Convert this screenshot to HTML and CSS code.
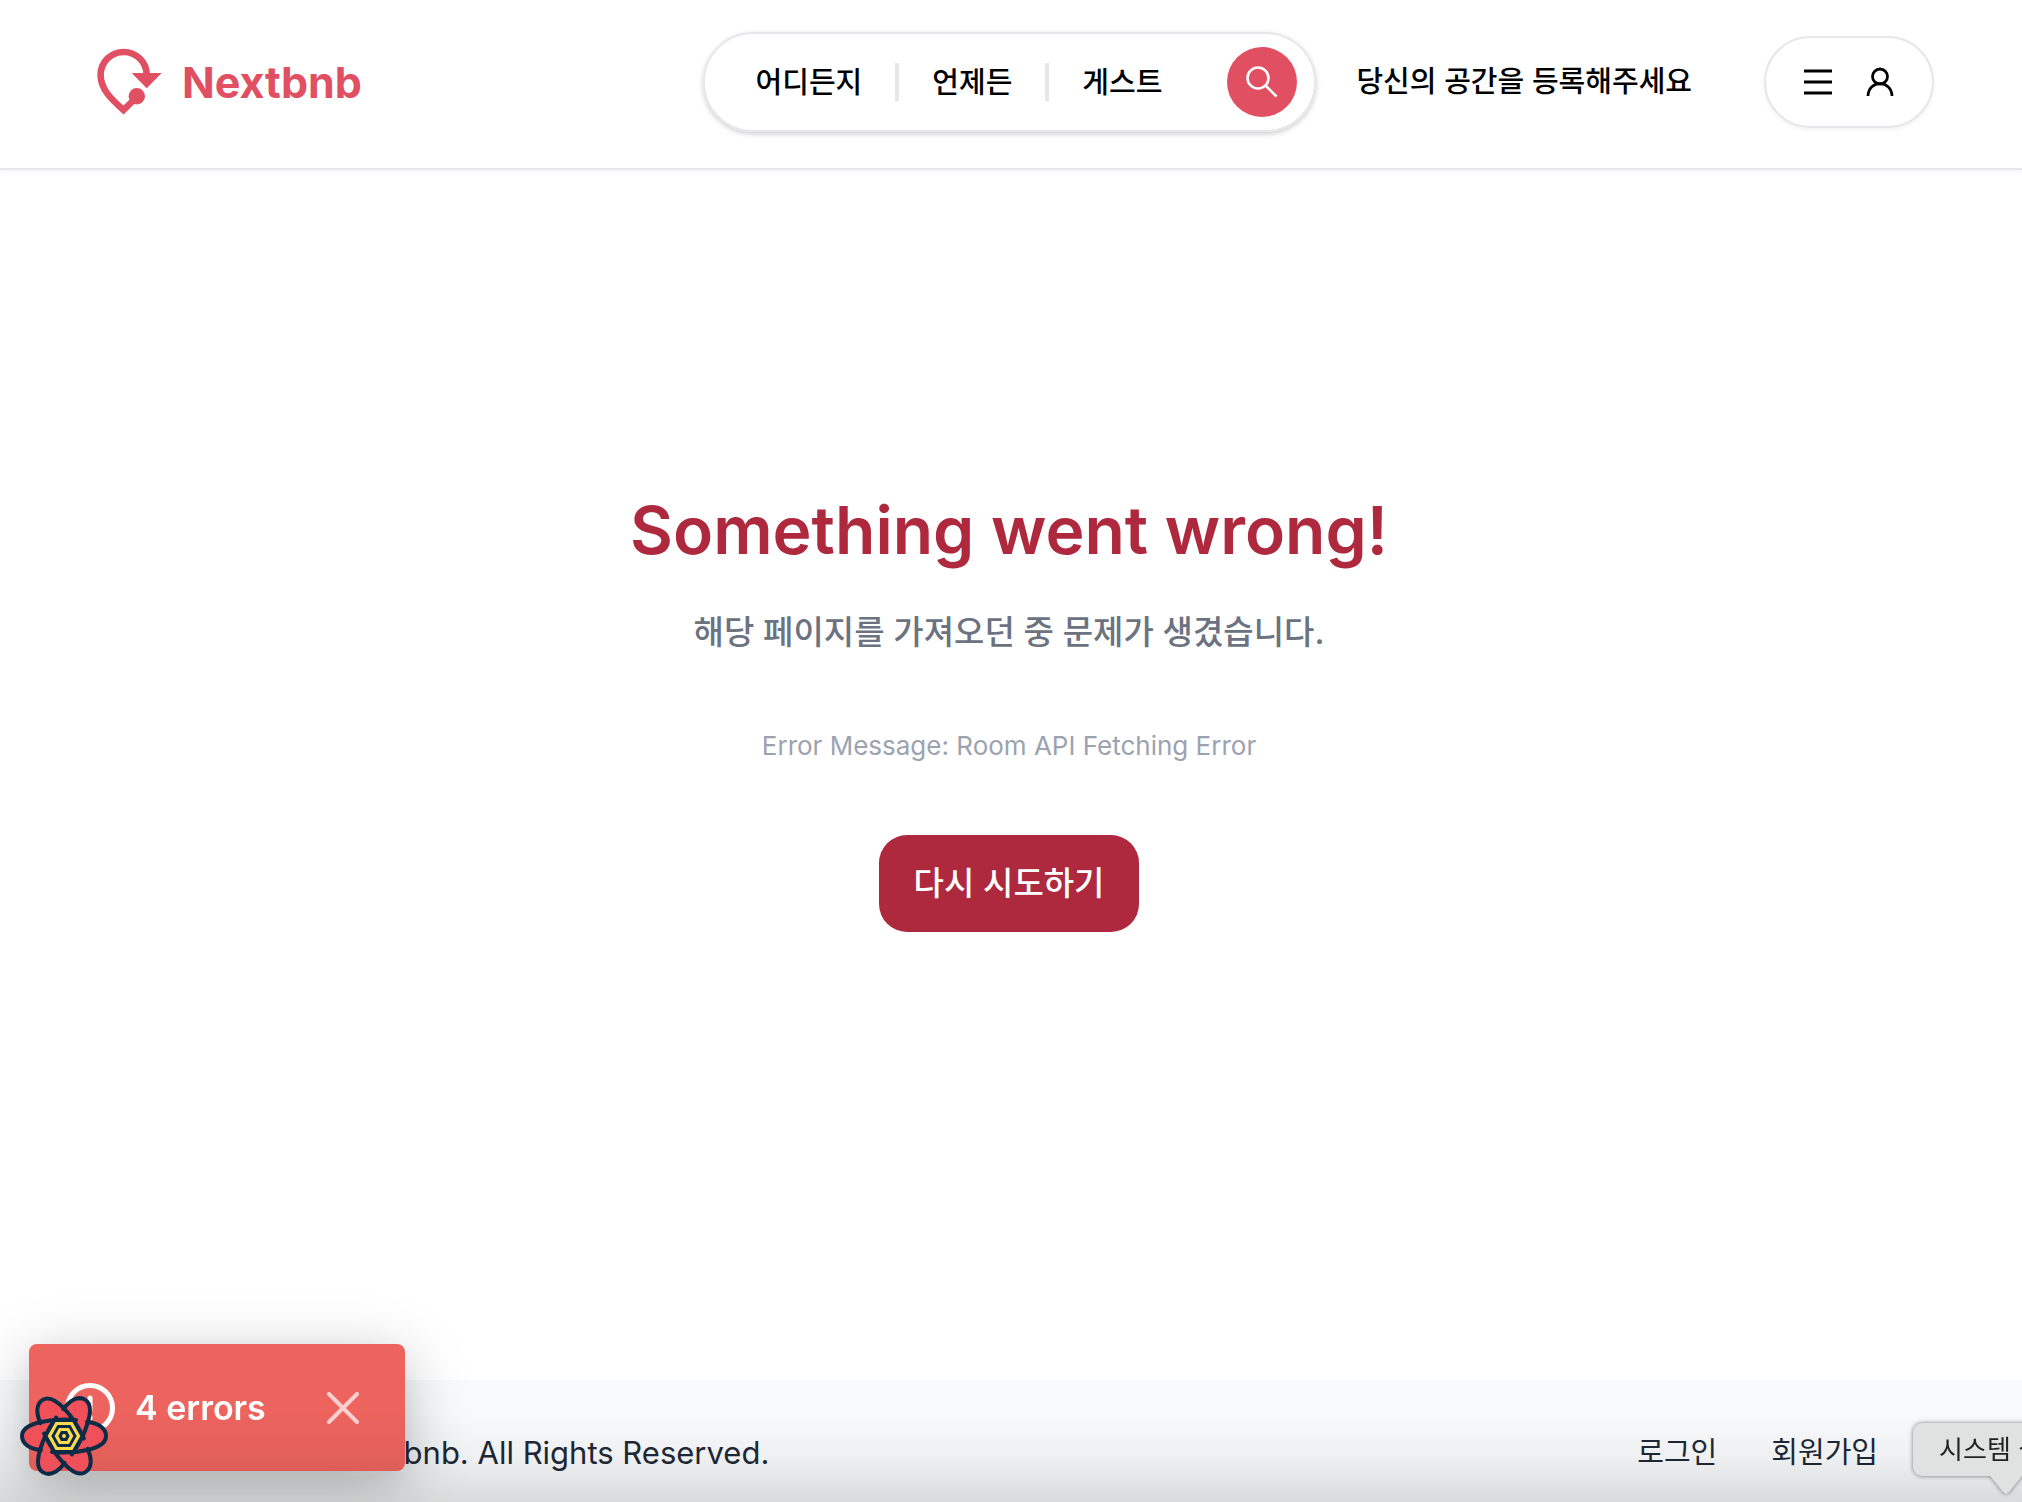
FILE: index.html
```
<!DOCTYPE html>
<html lang="ko">
<head>
    <meta charset="UTF-8">
    <meta name="viewport" content="width=device-width, initial-scale=1.0">
    <title>Nextbnb</title>
    <link rel="stylesheet" href="styles.css">
</head>
<body>
    <header class="header">
        <a class="logo" href="#">
            <svg class="logo-icon" viewBox="0 0 72 76" aria-hidden="true">
                <path d="M54.7 31 A23 23 0 0 0 8.6 31 C8.6 45 19 55 31.5 66 L44.8 53" fill="none" stroke="currentColor" stroke-width="6.6"/>
                <path d="M39.7 29h30L54.7 44.3z" fill="currentColor"/>
                <circle cx="44.8" cy="52.3" r="8.2" fill="currentColor"/>
            </svg>
            Nextbnb
        </a>

        <div class="search-bar">
            <button class="search-item" type="button">어디든지</button>
            <button class="search-item" type="button">언제든</button>
            <button class="search-item" type="button">게스트</button>
            <button class="search-button" type="button" aria-label="검색">
                <svg viewBox="0 0 32 32" aria-hidden="true">
                    <circle cx="12" cy="12" r="10.5"/>
                    <path d="M19.5 19.5 L30.5 30.5"/>
                </svg>
            </button>
        </div>

        <a class="host-link" href="#">당신의 공간을 등록해주세요</a>

        <button class="user-menu" type="button" aria-label="메뉴">
            <svg class="menu-icon" viewBox="0 0 28 28" aria-hidden="true">
                <path d="M0 3h28M0 14h28M0 25h28"/>
            </svg>
            <svg class="user-icon" viewBox="0 0 28 28" aria-hidden="true">
                <circle cx="14" cy="8.5" r="7.5"/>
                <path d="M2 28 C2.5 11.5 25.5 11.5 26 28"/>
            </svg>
        </button>
    </header>

    <main class="error-page">
        <h1>Something went wrong!</h1>
        <p class="error-desc">해당 페이지를 가져오던 중 문제가 생겼습니다.</p>
        <p class="error-message">Error Message: Room API Fetching Error</p>
        <button class="retry-button" type="button">다시 시도하기</button>
    </main>

    <footer class="footer">
        <p>Copyright © 2023 Nextbnb. All Rights Reserved.</p>
        <nav class="footer-links">
            <a href="#">로그인</a>
            <a href="#">회원가입</a>
        </nav>
    </footer>

    <div class="toast" role="alert">
        <svg class="toast-icon" viewBox="0 0 50 50" aria-hidden="true">
            <circle cx="25" cy="25" r="22.5"/>
            <path d="M25 15v12M25 34v1"/>
        </svg>
        <span>4 errors</span>
        <button class="toast-close" type="button" aria-label="닫기">
            <svg viewBox="0 0 32 32" aria-hidden="true">
                <path d="M2 2l28 28M30 2L2 30"/>
            </svg>
        </button>
    </div>

    <div class="dock-shade"></div>

    <button class="devtools-button" type="button" aria-label="Open React Query Devtools">
        <svg viewBox="-45 -40 90 80" aria-hidden="true">
            <defs>
                <path id="petal" d="M12 -16 C-10 -18 -42 -14 -42 0 C-42 8 -34 13 -23 14"/>
            </defs>
            <g fill="#ef5059">
                <use href="#petal"/>
                <use href="#petal" transform="rotate(60)"/>
                <use href="#petal" transform="rotate(120)"/>
                <use href="#petal" transform="rotate(180)"/>
                <use href="#petal" transform="rotate(240)"/>
                <use href="#petal" transform="rotate(300)"/>
            </g>
            <g fill="none" stroke="#0b2b47" stroke-width="4" stroke-linecap="round">
                <use href="#petal"/>
                <use href="#petal" transform="rotate(60)"/>
                <use href="#petal" transform="rotate(120)"/>
                <use href="#petal" transform="rotate(180)"/>
                <use href="#petal" transform="rotate(240)"/>
                <use href="#petal" transform="rotate(300)"/>
            </g>
            <path d="M-10-17H10L20 0L10 17H-10L-20 0z" fill="#0b2b47"/>
            <g fill="none" stroke="#ffd94c" stroke-width="3.2">
                <path d="M-7.5-12.5H7.5L14.5 0L7.5 12.5H-7.5L-14.5 0z"/>
                <path d="M-4-6.5H4L7.5 0L4 6.5H-4L-7.5 0z"/>
            </g>
            <circle r="2" fill="#ffd94c"/>
        </svg>
    </button>

    <div class="dock-tooltip" role="tooltip">시스템 설정</div>
</body>
</html>
```
FILE: styles.css
```
* {
    margin: 0;
    padding: 0;
    box-sizing: border-box;
}

body {
    display: flex;
    flex-direction: column;
    min-height: 100vh;
    overflow-x: hidden;
    background: #fff;
    color: #000;
    font-family: Inter, "Noto Sans CJK KR", sans-serif;
    font-size: 29px;
    line-height: 40px;
}

a {
    color: inherit;
    text-decoration: none;
}

button {
    border: none;
    background: none;
    color: inherit;
    font: inherit;
    cursor: pointer;
}

svg {
    display: block;
}

.header {
    display: flex;
    align-items: center;
    padding: 32px 88px 36px 92px;
    border-bottom: 2px solid #e5e7eb;
    box-shadow: 0 2px 4px rgba(0, 0, 0, 0.05);
}

.logo {
    display: flex;
    align-items: center;
    gap: 18px;
    margin-right: auto;
    color: #e15062;
    font-size: 43px;
    font-weight: 700;
}

.logo-icon {
    width: 72px;
    height: 76px;
}

.search-bar {
    display: flex;
    align-items: center;
    height: 100px;
    padding: 0 17px 0 18px;
    border: 2px solid #e5e7eb;
    border-radius: 50px;
    box-shadow: 0 2px 6px rgba(0, 0, 0, 0.1), 0 2px 4px rgba(0, 0, 0, 0.1);
}

.search-item {
    height: 38px;
    padding: 0 33px;
    border-right: 4px solid #e5e7eb;
    font-weight: 500;
    line-height: 40px;
}

.search-item:nth-child(3) {
    border-right: none;
}

.search-button {
    display: grid;
    place-items: center;
    width: 70px;
    height: 70px;
    margin-left: 32px;
    border-radius: 50%;
    background: #e15062;
}

.search-button svg {
    width: 32px;
    height: 32px;
    fill: none;
    stroke: #fff;
    stroke-width: 2.6;
}

.host-link {
    margin: 0 72px 0 40px;
    font-weight: 500;
    white-space: nowrap;
}

.user-menu {
    display: flex;
    align-items: center;
    gap: 34px;
    height: 92px;
    padding: 0 38px;
    border: 2px solid #e5e7eb;
    border-radius: 46px;
    box-shadow: 0 2px 4px rgba(0, 0, 0, 0.05);
}

.user-menu svg {
    width: 28px;
    height: 28px;
    overflow: visible;
    fill: none;
    stroke: #000;
    stroke-width: 2.8;
}

.error-page {
    flex: 1;
    display: flex;
    flex-direction: column;
    align-items: center;
    padding: 320px 4px 0 0;
    text-align: center;
}

h1 {
    color: #ae293e;
    font-size: 66px;
    font-weight: 600;
    line-height: 80px;
}

.error-desc {
    margin-top: 38px;
    color: #6b7280;
    font-size: 33px;
    font-weight: 500;
    line-height: 48px;
}

.error-message {
    margin-top: 70px;
    color: #9ca3af;
    font-size: 26px;
}

.retry-button {
    margin-top: 69px;
    padding: 24px 35px;
    border-radius: 28px;
    background: #ae293e;
    color: #fff;
    font-size: 33px;
    font-weight: 500;
    line-height: 49px;
}

.footer {
    display: flex;
    align-items: center;
    justify-content: space-between;
    height: 122px;
    padding: 24px 144px 0 60px;
    background: #f9fafb;
    color: #1f2937;
}

.footer p {
    font-size: 31px;
}

.footer-links {
    display: flex;
    gap: 54px;
}

.toast {
    position: fixed;
    left: 29px;
    bottom: 31px;
    display: flex;
    align-items: center;
    width: 376px;
    height: 127px;
    padding: 0 46px 0 36px;
    border-radius: 8px;
    background: #ed645f;
    box-shadow: 0 16px 64px rgba(0, 0, 0, 0.25), 0 8px 32px rgba(0, 0, 0, 0.05);
    color: #fff;
    font-size: 34px;
    font-weight: 600;
}

.toast-icon {
    width: 50px;
    height: 50px;
    margin-right: 20px;
    fill: none;
    stroke: #fff;
    stroke-width: 5;
    stroke-linecap: round;
}

.toast-close {
    margin-left: auto;
    opacity: 0.7;
}

.toast-close svg {
    width: 32px;
    height: 32px;
    stroke: #fff;
    stroke-width: 4;
    stroke-linecap: round;
}

.dock-shade {
    position: fixed;
    left: 0;
    right: 0;
    bottom: 0;
    height: 90px;
    background: linear-gradient(rgba(0, 0, 0, 0), rgba(0, 0, 0, 0.04) 50%, rgba(0, 0, 0, 0.12));
    pointer-events: none;
}

.devtools-button {
    position: fixed;
    left: 19px;
    bottom: 26px;
}

.devtools-button svg {
    width: 90px;
    height: 80px;
}

.dock-tooltip {
    position: fixed;
    right: -70px;
    bottom: 26px;
    padding: 0 26px;
    border-radius: 9px;
    background: #e0e2e2;
    color: #222;
    filter: drop-shadow(0 0 2px rgba(0, 0, 0, 0.5));
    font-size: 26px;
    line-height: 53px;
    white-space: nowrap;
}

.dock-tooltip::after {
    content: "";
    position: absolute;
    left: 77px;
    top: 53px;
    width: 32px;
    height: 18px;
    background: #e0e2e2;
    clip-path: polygon(0 0, 100% 0, 60% 88%, 50% 100%, 40% 88%);
}
```
